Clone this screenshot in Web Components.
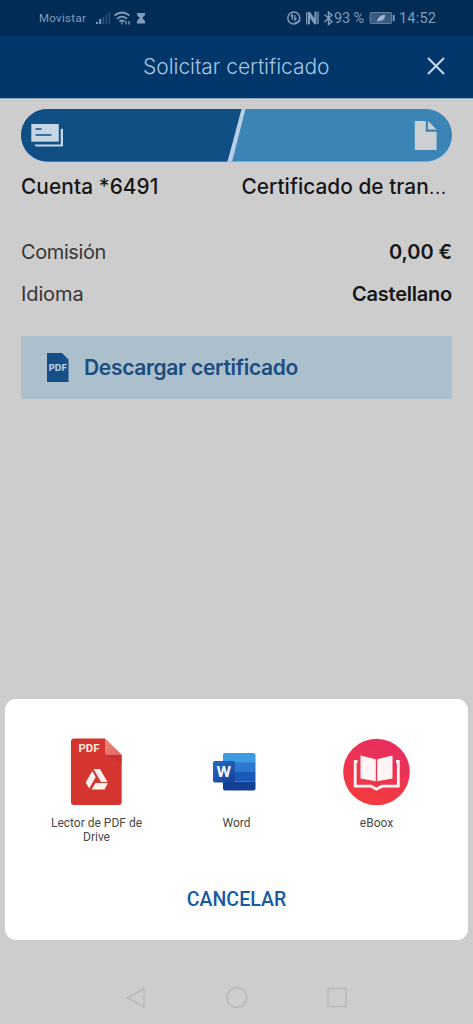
<!DOCTYPE html>
<html lang="es">
<head>
<meta charset="utf-8">
<meta name="viewport" content="width=device-width, initial-scale=1">
<title>Solicitar certificado</title>
<style>
html,body{margin:0;height:100%;background:#cdcdcd}
body{font-family:Inter,"Liberation Sans",sans-serif;overflow:hidden}
</style>
</head>
<body>
<phone-screen>
  <status-bar slot="top"></status-bar>
  <app-header slot="top"><fit-text span="186.500">Solicitar certificado</fit-text></app-header>
  <transfer-pill></transfer-pill>
  <party-row>
    <fit-text slot="from" span="137.500">Cuenta *6491</fit-text>
    <fit-text slot="to" span="205">Certificado de tran<span style="font-weight:300">...</span></fit-text>
  </party-row>
  <detail-row style="margin-top:32px"><fit-text slot="label" span="85">Comisión</fit-text><fit-text slot="value" span="63">0,00 €</fit-text></detail-row>
  <detail-row><fit-text slot="label" span="62.500">Idioma</fit-text><fit-text slot="value" span="100">Castellano</fit-text></detail-row>
  <download-button><fit-text span="214">Descargar certificado</fit-text></download-button>
  <share-sheet slot="bottom">
    <app-target kind="drive">Lector de PDF de Drive</app-target>
    <app-target kind="word">Word</app-target>
    <app-target kind="eboox">eBoox</app-target>
    <fit-text slot="cancel" span="99.5">CANCELAR</fit-text>
  </share-sheet>
  <nav-bar slot="bottom"></nav-bar>
</phone-screen>

<script>
const define = (name, html, setup) => customElements.define(name, class extends HTMLElement {
  connectedCallback() {
    if (this.shadowRoot) return;
    const t = document.createElement('template');
    t.innerHTML = html;
    this.attachShadow({ mode: 'open' }).append(t.content.cloneNode(true));
    if (setup) setup(this);
  }
});

define('phone-screen', `
<style>
:host{display:flex;flex-direction:column;width:473px;height:1024px;background:#cdcdcd}
main{flex:1;padding:10px 21px 0;min-height:0}
</style>
<slot name="top"></slot><main><slot></slot></main><slot name="bottom"></slot>`);

define('status-bar', `
<style>
:host{display:flex;align-items:center;box-sizing:border-box;height:36px;padding:0 36px 0 39px;background:#012c56;color:#819dba;font-family:Roboto,sans-serif}
svg{display:block;flex:none}
.op{width:47px;font-size:11.5px;letter-spacing:.3px;line-height:36px;white-space:nowrap}
.pc{width:32px;font-size:14.500px;white-space:nowrap;letter-spacing:-.1px}
.time{font-size:14.500px;margin-left:3px;width:38px;white-space:nowrap;letter-spacing:.2px}
.gap{flex:1}
</style>
<span class="op">Movistar</span>
<svg width="62" height="18" viewBox="0 0 62 18" fill="none" stroke="#819dba" style="margin-left:8px">
  <path d="M3 13v2M6.2 10v5" stroke-width="2"/>
  <path d="M9.5 8v7M12.4 5.500v9.500M15.4 3v12" stroke-width="1.500" opacity=".35"/>
  <path d="M20.500 6.500q7.500-6 15 0M23 9.800q5-4.300 10 0M25.500 12.500q2.500-2 5 0" stroke-width="1.700"/>
  <path d="M28 13v2.500M32 12v3.500M35 12v3.500" stroke-width="1.300"/>
  <path d="M43 4h8v2l-2.700 3 2.700 3v2.500H43V12l2.700-3L43 6z" fill="#819dba" stroke="none"/>
</svg>
<span class="gap"></span>
<svg width="48" height="18" viewBox="0 0 48 18" fill="none" stroke="#819dba">
  <circle cx="7.800" cy="9" r="6" stroke-width="1.500"/>
  <path d="M4.800 7.500l1.500-1.700v5M8.800 6v5l1.700-1.700M8.500 14l6-2.500" stroke-width="1.300"/>
  <path d="M20.700 3v12.500M32 2.500V15" stroke-width="1.300"/>
  <path d="M22 3h2.200l4.300 6.500V2.500h2v12.800h-2.200L24 8.800v6.500h-2z" fill="#819dba" stroke="none"/>
  <path d="M38.500 5.500l7.500 7-3.500 3V3l3.500 3-7.500 7" stroke-width="1.400"/>
</svg>
<span class="pc">93 %</span>
<svg width="27" height="14" viewBox="0 0 27 14" style="margin-left:3px">
  <rect x="1.200" y="1.500" width="21.500" height="11" rx="1.500" fill="#365a80" stroke="#5e7f9f" stroke-width="1.200"/>
  <path d="M24.800 4v6" stroke="#819dba" stroke-width="1.800"/>
  <path d="M8 11q0-6 8-7.500Q16.500 10 10.500 10z" fill="#a0b9cf"/>
</svg>
<span class="time">14:52</span>`);

define('app-header', `
<style>
:host{display:grid;grid-template-columns:143px 1fr 36px;align-items:center;height:62px;background:#01366a;color:#a9c6e1;border-bottom:1px solid #8fa9c0;font-size:21px;font-weight:300;line-height:60px}
svg{display:block}
</style>
<span></span><slot></slot>
<svg width="20" height="20" viewBox="0 0 20 20" style="margin-left:-11px;margin-bottom:3px"><path d="M2 2l16 16M18 2L2 18" stroke="#c3d5e5" stroke-width="2.200"/></svg>`);

define('transfer-pill', `
<style>:host{display:block;height:53px}svg{display:block}</style>
<svg width="431" height="54" viewBox="0 0 431 54">
  <defs><clipPath id="p"><rect y="0" width="431" height="52.500" rx="26.250"/></clipPath></defs>
  <rect y=".8" width="431" height="53" rx="26.500" fill="#b9cee3"/>
  <g clip-path="url(#p)"><rect width="431" height="53" fill="#3b84b6"/><path d="M0 0h222l-16 53H0z" fill="#104f84"/><path d="M220.500 0h4l-13.500 53h-4.500z" fill="#b8cfe3"/></g>
  <path d="M10.300 15h27.500v17.700H10.300z" fill="#c6d6e4"/>
  <path d="M14.500 20h6M14.500 26h16" stroke="#104f84" stroke-width="1.600"/>
  <path d="M39.700 19.800H42v17.700H15l-1.800-2h26.500z" fill="#c6d6e4"/>
  <path d="M393.800 12h11v10.800h10.800V41h-21.800z" fill="#cdd0d3"/>
  <path d="M407 12l8.600 8.500H407z" fill="#cdd0d3"/>
</svg>`);

define('party-row', `
<style>:host{display:flex;justify-content:space-between;height:24px;line-height:24px;margin-top:13px;font-size:20.800px;font-weight:550;color:#161616}
.r{margin-right:5.500px}</style>
<slot name="from"></slot><span class="r"><slot name="to"></slot></span>`);

define('detail-row', `
<style>:host{display:flex;justify-content:space-between;height:42px;line-height:42px;font-size:20px;color:#161616}
.l{color:#363636;font-weight:400}.v{font-weight:570}</style>
<span class="l"><slot name="label"></slot></span><span class="v"><slot name="value"></slot></span>`);

define('download-button', `
<style>:host{display:flex;align-items:center;box-sizing:border-box;height:63px;margin-top:21px;padding-left:25px;background:#abbfcc;color:#1a4d82;font-size:21px;font-weight:570;line-height:61px}
svg{display:block;margin-right:15px}text{font:800 8.500px Inter,sans-serif}</style>
<svg width="23" height="30" viewBox="0 0 23 30"><path d="M1 0h15l6.500 6.500V29H1z" fill="#145087"/><text x="2.800" y="18" textLength="18" lengthAdjust="spacingAndGlyphs" fill="#b4cee2">PDF</text></svg>
<slot></slot>`);

define('share-sheet', `
<style>:host{display:flex;flex-direction:column;box-sizing:border-box;height:241.500px;margin:0 5px;padding:39px 21px 0;background:#fff;border-radius:11px;font-family:Roboto,sans-serif}
.apps{display:grid;grid-template-columns:repeat(3,140px);height:133.500px}
.cancel{display:flex;justify-content:center;font-size:19.500px;font-weight:500;line-height:58px;color:#155aa3}</style>
<div class="apps"><slot></slot></div><div class="cancel"><slot name="cancel"></slot></div>`);

const icons = {
  drive: `<svg width="68" height="68" viewBox="0 0 68 68"><defs><linearGradient id="f" x2="1" y2="1"><stop stop-color="#f08a82"/><stop offset="1" stop-color="#e0645d"/></linearGradient></defs>
    <path d="M12 .500H43L59.700 17v47q0 3-3 3H12q-3 0-3-3V3.500q0-3 3-3z" fill="#d4352f"/>
    <path d="M44 17h15.700v9z" fill="#b92c29" opacity=".4"/><path d="M43 .500L59.700 17H46q-3 0-3-3z" fill="url(#f)"/>
    <text x="16.500" y="14" textLength="21" lengthAdjust="spacingAndGlyphs" style="font:700 11px Roboto,sans-serif" fill="#ffe5dc">PDF</text>
    <g fill="#fff0ec"><path d="M31.500 31h6.500l7.500 13H39z"/><path d="M30.200 33l3.500 6-6.500 11.500-3.500-6z"/><path d="M33.500 45h12.500l-3.500 6.500H29.500z"/></g></svg>`,
  word: `<svg width="68" height="68" viewBox="0 0 68 68"><defs><linearGradient id="w" x2="1" y2="1"><stop stop-color="#2568c4"/><stop offset="1" stop-color="#174197"/></linearGradient><clipPath id="r"><rect x="21" y="15" width="32.500" height="37.500" rx="2"/></clipPath></defs>
    <g clip-path="url(#r)"><path d="M21 15h33v10H21z" fill="#3c9ce2"/><path d="M21 24.500h33V34H21z" fill="#2c78d0"/><path d="M21 34h33v9.500H21z" fill="#1858b8"/><path d="M21 43.500h33V53H21z" fill="#123f92"/><path d="M21 23h12v23H21z" fill="#123b80" opacity=".25"/></g>
    <rect x="11" y="23" width="21.500" height="21.500" rx="2" fill="url(#w)"/><text x="14.500" y="39" textLength="14.500" lengthAdjust="spacingAndGlyphs" style="font:700 15.500px Roboto,sans-serif" fill="#f4f8ff">W</text></svg>`,
  eboox: `<svg width="68" height="68" viewBox="0 0 68 68"><defs><linearGradient id="e" x1=".7" y1="0" x2=".35" y2="1"><stop stop-color="#e62d62"/><stop offset="1" stop-color="#f53b3d"/></linearGradient></defs>
    <circle cx="34.500" cy="34" r="33.300" fill="url(#e)"/>
    <g fill="#fff5f5"><path d="M18.500 17.500l15.300 3.800v22L18.500 40.500zM50.500 17.500l-15.300 3.800v22l15.300-2.800z"/></g>
    <path d="M15.500 23.500h-2.300V48.200H29l5.500 3 5.500-3h16.300V23.500H54" fill="none" stroke="#fff5f5" stroke-width="2.800"/></svg>`
};
define('app-target', `
<style>:host{display:flex;flex-direction:column;align-items:center}
.i{height:68px}svg{display:block}
.t{width:110px;margin-top:10.500px;padding-left:1px;text-align:center;font-size:12px;line-height:14px;color:#484848}</style>
<div class="i"></div><div class="t"><slot></slot></div>`,
  el => { el.shadowRoot.querySelector('.i').innerHTML = icons[el.getAttribute('kind')]; });

define('nav-bar', `
<style>:host{display:flex;justify-content:center;gap:79px;box-sizing:border-box;height:84px;padding-top:47px}svg{display:block;fill:none;stroke:#b8b8b8;stroke-width:1.500}</style>
<svg width="21" height="22" viewBox="0 0 21 22"><path d="M18 1.500v18.500L1.500 11z"/></svg>
<svg width="22" height="22" viewBox="0 0 22 22"><circle cx="10.800" cy="10.500" r="10"/></svg>
<svg width="21" height="22" viewBox="0 0 21 22"><rect x="1" y="1.500" width="18" height="18"/></svg>`);

/* Tracks a single line of text so that it fills the width given in "span". */
define('fit-text', `<style>:host{display:block;white-space:nowrap}span{display:inline-block}</style><span><slot></slot></span>`,
  el => {
    const s = el.shadowRoot.querySelector('span');
    const n = el.textContent.length;
    s.style.letterSpacing = ((+el.getAttribute('span') - s.getBoundingClientRect().width) / n) + 'px';
  });
</script>
</body>
</html>
